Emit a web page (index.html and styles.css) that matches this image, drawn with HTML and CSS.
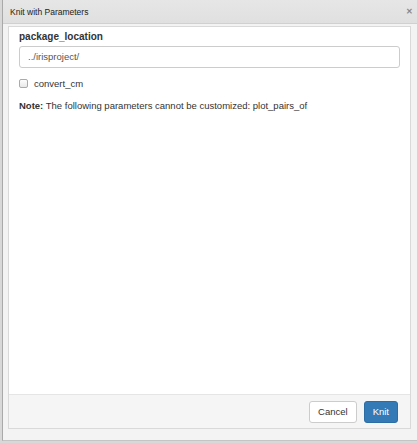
FILE: index.html
```html
<!DOCTYPE html>
<html>
<head>
<meta charset="utf-8">
<link rel="stylesheet" href="styles.css">
</head>
<body>
<div class="window">
  <div class="titlebar">
    <span class="title">Knit with Parameters</span>
    <span class="close">&#x2715;</span>
  </div>
  <div class="content">
    <div class="panel">
      <div class="body">
        <label class="field-label">package_location</label>
        <div class="input">../irisproject/</div>
        <div class="check-row">
          <span class="checkbox"></span>
          <span class="check-label">convert_cm</span>
        </div>
        <p class="note"><b>Note:</b> The following parameters cannot be customized: plot_pairs_of</p>
      </div>
      <div class="footer">
        <button class="btn btn-default">Cancel</button>
        <button class="btn btn-primary">Knit</button>
      </div>
    </div>
  </div>
</div>
</body>
</html>
```

FILE: styles.css
```css
html, body {
  margin: 0;
  padding: 0;
  width: 417px;
  height: 443px;
  overflow: hidden;
  background: #d8d8d8;
  font-family: "Liberation Sans", Arial, sans-serif;
}
.window {
  margin-left: 2px;
  width: 415px;
  height: 441px;
  border-left: 1px solid #a9a9a9;
  border-bottom: 1px solid #c4c4c4;
  box-sizing: border-box;
  background: #f3f3f3;
  display: flex;
  flex-direction: column;
}
.titlebar {
  height: 24px;
  flex: none;
  display: flex;
  align-items: center;
  justify-content: space-between;
  padding: 0 4px 0 7px;
  background: linear-gradient(#e6e6e6, #e0e0e0);
  border-bottom: 1px solid #d0d0d0;
  box-sizing: border-box;
}
.title {
  font-size: 8.5px;
  color: #222;
}
.close {
  font-size: 8px;
  font-weight: bold;
  color: #888;
}
.content {
  flex: 1;
  padding: 2px 6px 11px 5px;
  display: flex;
}
.panel {
  flex: 1;
  background: #fff;
  border: 1px solid #d9d9d9;
  display: flex;
  flex-direction: column;
}
.body {
  flex: 1;
  padding: 3px 10px 0 10px;
}
.field-label {
  display: block;
  font-weight: bold;
  font-size: 10px;
  color: #333;
  line-height: 13px;
  margin-bottom: 3px;
}
.input {
  height: 22px;
  box-sizing: border-box;
  border: 1px solid #ccc;
  border-radius: 3px;
  padding: 0 8px;
  font-size: 9.5px;
  line-height: 19px;
  color: #555;
}
.check-row {
  display: flex;
  align-items: center;
  margin-top: 9px;
  height: 13px;
}
.checkbox {
  width: 7px;
  height: 7px;
  border: 1px solid #aaa;
  border-radius: 2px;
  background: linear-gradient(#fdfdfd, #e8e8e8);
  margin-right: 6px;
}
.check-label {
  font-size: 9.5px;
  color: #333;
}
.note {
  margin: 10px 0 0 0;
  font-size: 9.5px;
  color: #333;
  line-height: 12px;
}
.footer {
  flex: none;
  height: 34px;
  box-sizing: border-box;
  border-top: 1px solid #e5e5e5;
  background: #f5f5f5;
  display: flex;
  justify-content: flex-end;
  align-items: center;
  gap: 7px;
  padding-right: 12px;
}
.btn {
  height: 22px;
  font-family: "Liberation Sans", Arial, sans-serif;
  font-size: 9.5px;
  border-radius: 3px;
  padding: 0 8px;
  cursor: pointer;
}
.btn-default {
  background: #fff;
  border: 1px solid #ccc;
  color: #333;
}
.btn-primary {
  background: #337ab7;
  border: 1px solid #2e6da4;
  color: #fff;
}
```
